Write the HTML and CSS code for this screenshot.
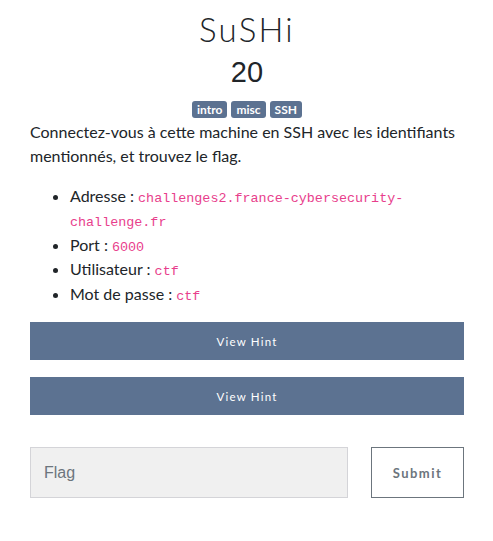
FILE: index.html
```html
<!DOCTYPE html>
<html>
<head>
<meta charset="utf-8">
<link rel="stylesheet" href="styles.css">
</head>
<body>
<div class="modal">
  <h1 class="title">SuSHi</h1>
  <h2 class="value">20</h2>
  <div class="tags">
    <span class="badge">intro</span>
    <span class="badge">misc</span>
    <span class="badge">SSH</span>
  </div>
  <p class="desc">Connectez-vous à cette machine en SSH avec les identifiants mentionnés, et trouvez le flag.</p>
  <ul class="info">
    <li>Adresse : <code>challenges2.france-cybersecurity-challenge.fr</code></li>
    <li>Port : <code>6000</code></li>
    <li>Utilisateur : <code>ctf</code></li>
    <li>Mot de passe : <code>ctf</code></li>
  </ul>
  <button class="hint">View Hint</button>
  <button class="hint">View Hint</button>
  <div class="submit-row">
    <input class="flag" type="text" placeholder="Flag">
    <button class="submit">Submit</button>
  </div>
</div>
</body>
</html>
```
FILE: styles.css
```css
html, body {
  margin: 0;
  padding: 0;
  background: #fff;
}
body {
  font-family: Lato, "Noto Sans", sans-serif;
  color: #212529;
}
.modal {
  width: 434px;
  padding: 0 29px 0 30px;
  display: flex;
  flex-direction: column;
}
.title {
  margin: 9px 0 0;
  text-align: center;
  font-weight: 300;
  font-size: 33px;
  line-height: 40px;
  letter-spacing: 2.2px;
}
.value {
  margin: 6px 0 0;
  text-align: center;
  font-family: "Liberation Sans", Arial, sans-serif;
  font-weight: 400;
  font-size: 29px;
  line-height: 34px;
}
.tags {
  display: flex;
  justify-content: center;
  gap: 4px;
  margin-top: 12px;
}
.badge {
  background: #5c7291;
  color: #fff;
  font-weight: 700;
  font-size: 12px;
  line-height: 17px;
  padding: 0 5px;
  border-radius: 3px;
}
.desc {
  margin: 2px 0 16px;
  font-size: 16px;
  line-height: 24px;
}
.info {
  margin: 0 0 16px;
  padding-left: 40px;
  font-size: 16px;
  line-height: 24.4px;
}
code {
  font-family: "Liberation Mono", monospace;
  font-size: 13.4px;
  line-height: 1;
  color: #e83e8c;
}
.hint {
  height: 38px;
  margin: 0 0 17px;
  border: none;
  background: #5c7291;
  color: #fff;
  font-family: Lato, sans-serif;
  font-size: 11.5px;
  letter-spacing: 1.2px;
}
.submit-row {
  display: flex;
  justify-content: space-between;
  margin-top: 15px;
}
.flag {
  width: 318px;
  height: 51px;
  box-sizing: border-box;
  border: 1px solid #d4d4d8;
  background: #f0f0f0;
  padding: 0 13px;
  font-family: "Liberation Sans", Arial, sans-serif;
  font-size: 16px;
  color: #495057;
}
.flag::placeholder {
  color: #6c757d;
}
.submit {
  width: 93px;
  height: 51px;
  box-sizing: border-box;
  border: 1px solid #6c757d;
  background: #fff;
  color: #6c757d;
  font-family: Lato, sans-serif;
  font-weight: 700;
  font-size: 13px;
  letter-spacing: 1.5px;
}
```
